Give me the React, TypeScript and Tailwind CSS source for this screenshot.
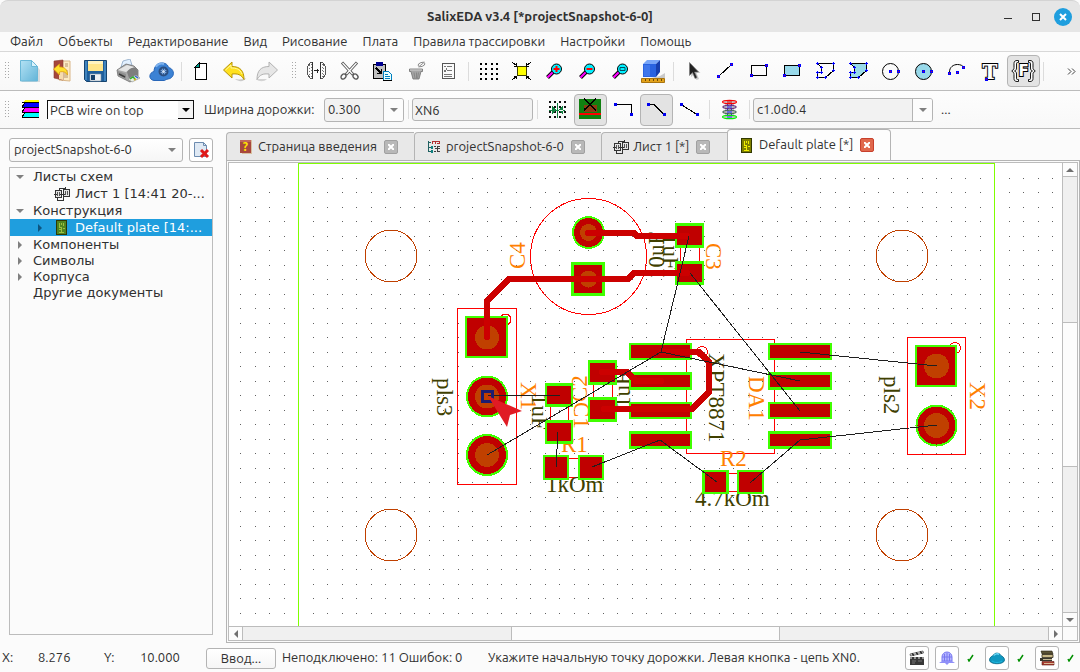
import { useState } from 'react';
import type { ReactNode } from 'react';
import clsx from 'clsx';

const uiFont = "font-['Ubuntu','Noto_Sans',sans-serif]";
const treeFont = "font-['DejaVu_Sans',sans-serif]";

function Icon({ children, crisp = false }: { children: ReactNode; crisp?: boolean }) {
  return (
    <svg
      className="block h-6 w-[25px] shrink-0"
      viewBox="0 0 25 24"
      fill="none"
      shapeRendering={crisp ? 'crispEdges' : 'auto'}
      aria-hidden="true"
    >
      {children}
    </svg>
  );
}

// Blue handle with a red core, used by all drawing tools
function Node({ x, y }: { x: number; y: number }) {
  return (
    <>
      <rect x={x - 1} y={y - 1} width="3" height="3" fill="#0000ff" />
      <rect x={x} y={y} width="1" height="1" fill="#c00040" />
    </>
  );
}

function Cross({ x, y }: { x: number; y: number }) {
  return <path d={`M${x - 1} ${y}h3v1h-3zM${x} ${y - 1}h1v3h-1z`} fill="#0000ff" />;
}

function Magnifier({ children }: { children: ReactNode }) {
  return (
    <Icon>
      <path d="M5.500 18.500l6-6" stroke="#000" strokeWidth="4" />
      <path d="M5.500 18.500l6-6" stroke="#ff00ff" strokeWidth="2.200" />
      <circle cx="14.500" cy="10" r="5" fill="#00f0ff" stroke="#000" />
      {children}
    </Icon>
  );
}

const POLY = 'M4.500 4.500h16v7l-8 7h-8v-5h4v-5z';
const polyNodes = [[4, 4], [20, 4], [20, 11], [12, 18], [4, 18], [4, 13], [8, 13], [8, 8]];

const icons: Record<string, ReactNode> = {
  new: (
    <Icon>
      <path d="M5 3h12l6 8v12H5z" fill="#9aa4aa" opacity=".35" />
      <path d="M3.500 1.500h11l6 6v14.500h-17z" fill="url(#paper)" stroke="#6ab8d8" />
      <path d="M14.500 1.500l6 6h-6z" fill="#d8f2fc" stroke="#6ab8d8" />
    </Icon>
  ),
  open: (
    <Icon>
      <path d="M9 2h11v20l-11-1z" fill="#fdebc4" stroke="#d9b688" />
      <path d="M15 5h3M15 7h3M14 12h4M14 14h4M14 16h4M14 18h4" stroke="#b4946c" />
      <path d="M4 2l9-1v20l-9-2z" fill="#a5473c" stroke="#8a3a30" strokeWidth=".6" />
      <path d="M9 11h4v10l-4-1z" fill="#f6dcae" />
      <path d="M3.500 10l6-5v3c5 0 8 2 8 8-2-3-4-4-8-3v3z" fill="#ffe030" stroke="#e0a010" strokeWidth=".8" />
    </Icon>
  ),
  save: (
    <Icon>
      <path d="M1.500 1.500h22v21h-20l-2-2z" fill="#1f5f9c" stroke="#17446f" />
      <path d="M5 2h15v10H5z" fill="#ffe58a" />
      <path d="M5 2h15v3H5z" fill="#fff3c0" />
      <path d="M2 2h2v19H2zM21 2h2v20h-2z" fill="#3f83bd" />
      <path d="M7 15h11v7H7z" fill="#eef1f4" stroke="#8294a4" strokeWidth=".6" />
      <path d="M8 16h4v5H8z" fill="#15406a" />
    </Icon>
  ),
  print: (
    <Icon>
      <path d="M5 8l2-6 7-2 2 6z" fill="#e2f0ff" stroke="#8ba6c4" strokeWidth=".8" />
      <path d="M1 11l9-6 8 2 4 4v7l-8 5-12-6z" fill="#a8a8a8" stroke="#6f6f6f" strokeWidth=".8" />
      <path d="M2 11l9-5 7 2-8 5z" fill="#e4e4e4" />
      <path d="M11 13c2-4 6-5 9-4l2 3v5l-8 5z" fill="#7e7e7e" />
      <path d="M2 12l8 3v5l-8-4z" fill="#909090" />
      <path d="M3 15l6 3" stroke="#3c3c3c" strokeWidth="1.500" />
      <path d="M12 20l8-4 4 3-8 4z" fill="#e8efe4" stroke="#8a8a8a" strokeWidth=".6" />
      <path d="M14 20l3-2 2 2" stroke="#2fae2f" strokeWidth="1.500" />
      <path d="M19 17l3 2" stroke="#315bd0" strokeWidth="1.500" />
      <path d="M18 21l2-1" stroke="#d8b020" strokeWidth="1.500" />
    </Icon>
  ),
  cloud: (
    <Icon>
      <path
        d="M5 21.500c-6-1-5-8 0-9 0-7 6-10 11-8 2 .8 3 2 3.500 4 5 1 6.500 7 3 10-2 2-5 1-7 3z"
        fill="#3c82d4"
        stroke="#2866b8"
      />
      <path d="M7 8c1-3 5-4 8-3" stroke="#7db2ee" strokeWidth="2" />
      <circle cx="14.500" cy="12.500" r="4" fill="#7ba6dc" stroke="#2c4f80" strokeWidth="2" />
      <path d="M14.500 8v9M10 12.500h9M11.500 9.500l6 6M17.500 9.500l-6 6" stroke="#24518c" strokeWidth=".8" />
      <circle cx="14.500" cy="12.500" r="1.500" fill="#cfe2f8" />
    </Icon>
  ),
  page: (
    <Icon crisp>
      <path d="M9.500 4.500h8v16h-11v-13z" fill="#fff" stroke="#000" />
      <path d="M6 8h4V4z" fill="#00a090" stroke="#000" />
    </Icon>
  ),
  undo: (
    <Icon>
      <path d="M13 20c5 1 9 0 11-1-2 4-7 4-11 1z" fill="#9c9c9c" opacity=".5" />
      <path d="M1.500 11L10 3v4.500c8 0 12 4 12 13-3-5-6-6-12-5.500v4z" fill="#ffe11f" stroke="#b79408" />
      <path d="M3.500 11L9 6v3c5 0 9 1 11 6" stroke="#fff6a0" />
    </Icon>
  ),
  redo: (
    <Icon>
      <path d="M1 20c3 3 8 3 11 0z" fill="#9c9c9c" opacity=".4" />
      <path d="M22.500 11L14 3v4.500c-8 0-12 4-12 13 3-5 6-6 12-5.500v4z" fill="#e6e6e6" stroke="#b2b2b2" />
    </Icon>
  ),
  spacing: (
    <Icon crisp>
      <path d="M8.500 3v17M16.500 3v17" stroke="#333" />
      <path d="M8 3.500H6.500l-3 4v8l3 4H8M17 3.500h1.500l3 4v8l-3 4H17" stroke="#555" />
      <path d="M5.500 6v11M7 5v13M19.500 6v11M18 5v13" stroke="#777" strokeDasharray="1 2" />
      <path d="M10 11.500h5M13.500 9.500v4" stroke="#222" />
    </Icon>
  ),
  cut: (
    <Icon>
      <path d="M5 3.500l11 12M20 3.500l-11 12" stroke="#555" strokeWidth="3" />
      <path d="M5.500 4l10 11M19.500 4l-10 11" stroke="#fff" strokeWidth="1.200" />
      <ellipse cx="6.500" cy="17.500" rx="2.200" ry="2.800" transform="rotate(45 6.500 17.500)" stroke="#555" strokeWidth="1.300" />
      <ellipse cx="18.500" cy="17.500" rx="2.200" ry="2.800" transform="rotate(-45 18.500 17.500)" stroke="#555" strokeWidth="1.300" />
    </Icon>
  ),
  paste: (
    <Icon crisp>
      <path d="M3.500 5.500h12v14h-12z" fill="#c0c0c0" stroke="#000" />
      <path d="M6 3h7v4H6z" fill="#000090" />
      <path d="M6 9l5 5M11.500 9.500v5h-5" stroke="#000" strokeWidth="1.500" />
      <path d="M13.500 12.500h5l3 3v6h-8z" fill="#e8ffff" stroke="#0080c0" />
      <path d="M15 15.500h3M15 17.500h5M15 19.500h5" stroke="#0080c0" />
      <path d="M13 21.500h9" stroke="#000" />
    </Icon>
  ),
  purge: (
    <Icon>
      <path d="M6.500 10h13v2.500h-1.500l-2 7.500h-6l-2-7.500h-1.500z" fill="#a4a4a4" stroke="#707070" strokeWidth=".8" />
      <path d="M7 11h12" stroke="#d0d0d0" />
      <path d="M11 13.500l1 6M13.500 13.500v6M15.500 13.500l-1 6" stroke="#808080" strokeWidth=".8" />
      <ellipse cx="18.500" cy="5.500" rx="3.500" ry="2" fill="#fafafa" stroke="#888" strokeWidth=".9" transform="rotate(-20 18.500 5.500)" />
      <path d="M15.500 8l6-5" stroke="#888" strokeWidth=".9" />
    </Icon>
  ),
  note: (
    <Icon crisp>
      <path d="M6.500 4.500h12v15h-12z" fill="#fafafa" stroke="#555" />
      <path d="M8 7.500h2M11 7.500h5M8 11.500l1 1 2-3M11 11.500h5M8 15.500h8M8 17.500h8" stroke="#777" />
    </Icon>
  ),
  grid: (
    <Icon crisp>
      {[4, 9, 14, 19].map((y) =>
        [4, 9, 15, 20].map((x) => <rect key={`${x}-${y}`} x={x} y={y} width="2" height="2" fill="#000" />),
      )}
    </Icon>
  ),
  fit: (
    <Icon crisp>
      <path d="M8.500 7.500h9v9h-9z" fill="#ffff00" stroke="#404000" />
      <path d="M3 3l5 4M22 3l-5 4M3 21l5-4M22 21l-5-4" stroke="#000" />
      <path d="M7.500 4v3H5M17.500 4v3H20M7.500 20v-3H5M17.500 20v-3H20" stroke="#000" />
    </Icon>
  ),
  zoomIn: (
    <Magnifier>
      <path d="M14.500 7v6M11.500 10h6" stroke="#ff0000" strokeWidth="2" />
    </Magnifier>
  ),
  zoomOut: (
    <Magnifier>
      <path d="M11.500 10h6" stroke="#ff0000" strokeWidth="2" />
    </Magnifier>
  ),
  zoomArea: (
    <Magnifier>
      <path d="M12 8.500h5v3h-5z" stroke="#005060" />
    </Magnifier>
  ),
  cube: (
    <Icon>
      <path d="M19 17l5-3v5H10z" fill="#999" opacity=".5" />
      <path d="M2 5l4-4h13l-4 4z" fill="#77a5f8" />
      <path d="M2 5h13v13H2z" fill="#2a63e0" />
      <path d="M15 5l4-4v12l-4 5z" fill="#173fae" />
      <path d="M3 6h6v11H3z" fill="#4d84f2" opacity=".6" />
      <path d="M.5 19.500h23v4H.5z" fill="#e3a21a" stroke="#a87410" />
      <path d="M4.500 20v2M8.500 20v2M12.500 20v2M16.500 20v2M20.500 20v2" stroke="#6b4a08" />
    </Icon>
  ),
  cursor: (
    <Icon>
      <path d="M10 5v13l3-3 2.500 6 2.500-1-2.500-6h4z" fill="#999" opacity=".5" />
      <path d="M8.500 3.500v13l3-3 2.500 6 2-1-2.500-5.500h4z" fill="#222" stroke="#777" strokeWidth=".6" />
    </Icon>
  ),
  line: (
    <Icon crisp>
      <path d="M4 18L18 5" stroke="#000" />
      <Node x={4} y={17} />
      <Node x={17} y={5} />
    </Icon>
  ),
  rect: (
    <Icon crisp>
      <path d="M4.500 6.500h15v10h-15z" stroke="#000" />
      <Node x={4} y={16} />
      <Node x={19} y={6} />
    </Icon>
  ),
  rectFill: (
    <Icon crisp>
      <path d="M4.500 6.500h15v10h-15z" fill="#98d9ea" stroke="#000" />
      <Node x={4} y={16} />
      <Node x={19} y={6} />
    </Icon>
  ),
  poly: (
    <Icon crisp>
      <path d={POLY} stroke="#000" />
      {polyNodes.map(([x, y]) => <Cross key={`${x}-${y}`} x={x} y={y} />)}
    </Icon>
  ),
  polyFill: (
    <Icon crisp>
      <path d={POLY} fill="#98d9ea" stroke="#000" />
      {polyNodes.map(([x, y]) => <Cross key={`${x}-${y}`} x={x} y={y} />)}
    </Icon>
  ),
  circle: (
    <Icon>
      <circle cx="11.500" cy="12.500" r="8" stroke="#000" />
      <Node x={11} y={12} />
      <Node x={19} y={12} />
    </Icon>
  ),
  circleFill: (
    <Icon>
      <circle cx="11.500" cy="12.500" r="8" fill="#98d9ea" stroke="#000" />
      <Node x={11} y={12} />
      <Node x={19} y={12} />
    </Icon>
  ),
  arc: (
    <Icon>
      <path d="M4.500 13c0-5 4-7.500 8-7.500 3 0 5 1 6.500 3" stroke="#000" />
      <Node x={4} y={14} />
      <Node x={12} y={13} />
      <Node x={18} y={8} />
    </Icon>
  ),
  text: (
    <Icon>
      <text
        x="12"
        y="20"
        textAnchor="middle"
        className="font-['DejaVu_Serif',serif] text-[20px] font-bold"
        fill="#fff"
        stroke="#000"
        strokeWidth="2"
        paintOrder="stroke"
      >
        T
      </text>
      <Node x={8} y={20} />
    </Icon>
  ),
  frame: (
    <Icon>
      <text
        x="12.500"
        y="17"
        textAnchor="middle"
        className="font-['DejaVu_Sans',sans-serif] text-[15px] font-bold"
        fill="#fff"
        stroke="#000"
        strokeWidth="2"
        paintOrder="stroke"
      >
        F
      </text>
      <path
        d="M7.500 1.500H6c-2 0-3 1-3 3v4c0 2-.5 2.500-2 3v1c1.500.5 2 1 2 3v4c0 2 1 3 3 3h1.500v-2H6.500c-.8 0-1-.4-1-1.200V15c0-1.700-.6-2.500-2-3 1.400-.5 2-1.300 2-3V4.700c0-.8.2-1.200 1-1.200h1zM17.500 1.500H19c2 0 3 1 3 3v4c0 2 .5 2.500 2 3v1c-1.500.5-2 1-2 3v4c0 2-1 3-3 3h-1.500v-2h1c.8 0 1-.4 1-1.200V15c0-1.700.6-2.500 2-3-1.400-.5-2-1.300-2-3V4.700c0-.8-.2-1.200-1-1.200h-1z"
        fill="#fff"
        stroke="#000"
        strokeWidth=".9"
      />
    </Icon>
  ),
  layers: (
    <Icon crisp>
      <path d="M8 2h14v3H5z" fill="#ffff00" />
      <path d="M8 5h14v4H5z" fill="#0000ff" />
      <path d="M8 10h14v4H5z" fill="#ff00ff" />
      <path d="M8 15h14v4H5z" fill="#00ffff" />
      <path d="M5 4.500h17M5 9.500h17M5 14.500h17M5 19.500h17M8 5l-3 4M8 10l-3 4M8 15l-3 4" stroke="#000" />
    </Icon>
  ),
  snap: (
    <Icon crisp>
      {[3, 8, 13, 18].map((y) =>
        [4, 9, 14, 19].map((x) => <rect key={`${x}-${y}`} x={x} y={y} width="2" height="2" fill="#111" />),
      )}
      <path d="M12 5h1v15h-1zM7 8l5 4-5 4zM18 8l-5 4 5 4zM4 12h16v1H4z" fill="#108040" />
    </Icon>
  ),
  drc: (
    <Icon crisp>
      <path d="M1 1h22v20H1z" fill="#108010" />
      <path d="M6 7h13v7H6z" fill="#8c3c14" />
      <path d="M1 15h22v2H1z" fill="#ff0000" />
      <path d="M6 1l12 11M18 1L6 12" stroke="#000" strokeWidth="1.500" />
    </Icon>
  ),
  corner90: (
    <Icon crisp>
      <path d="M4 6.500h16.500V17" stroke="#000" />
      <path d="M3 5h3v3H3zM19 15h3v3h-3z" fill="#0000ee" />
    </Icon>
  ),
  corner45: (
    <Icon crisp>
      <path d="M4 6.500h6l10 10" stroke="#000" />
      <path d="M3 5h3v3H3zM19 15h3v3h-3z" fill="#0000ee" />
    </Icon>
  ),
  direct: (
    <Icon crisp>
      <path d="M4 6.500l16 10" stroke="#000" />
      <path d="M3 5h3v3H3zM19 15h3v3h-3z" fill="#0000ee" />
    </Icon>
  ),
  via: (
    <Icon>
      <path d="M8 4h9v15H8z" fill="#c4c4cc" />
      <path d="M10.500 4v15M14.500 4v15" stroke="#3030d0" strokeDasharray="3 2" />
      <ellipse cx="12.500" cy="4" rx="7" ry="1.700" fill="#c8c8c8" stroke="#ff0000" strokeWidth="1.200" />
      <path d="M10 4h5" stroke="#d00000" />
      <ellipse cx="12.500" cy="9" rx="7" ry="1.700" fill="#b8b8b8" stroke="#602080" />
      <ellipse cx="12.500" cy="14" rx="7" ry="1.700" fill="#b8b8b8" stroke="#406050" />
      <ellipse cx="12.500" cy="19" rx="7" ry="1.700" fill="#c8c8c8" stroke="#00f000" strokeWidth="1.200" />
      <path d="M10 9h5M10 14h5M10 19h5" stroke="#2020ff" />
    </Icon>
  ),
};

function ToolButton({ name, label, active = false }: { name: string; label: string; active?: boolean }) {
  return (
    <button
      aria-label={label}
      aria-pressed={active}
      className={clsx(
        'flex h-8 w-[33px] shrink-0 items-center justify-center rounded border',
        active ? 'border-[#b4b4b4] bg-[#e3e3e3]' : 'border-transparent hover:bg-[#ececec]',
      )}
    >
      {icons[name]}
    </button>
  );
}

function Separator({ className = 'w-[7px]' }: { className?: string }) {
  return (
    <div className={clsx('flex shrink-0 justify-center', className)}>
      <div className="h-[19px] w-px bg-[#dcdcdc]" />
    </div>
  );
}

function Grip() {
  return (
    <svg className="h-[18px] w-1 shrink-0" viewBox="0 0 4 18" shapeRendering="crispEdges" aria-hidden="true">
      {[0, 3, 6, 9, 12, 15].map((y) => (
        <path key={y} d={`M0 ${y}h1v1h-1zM3 ${y}h1v1h-1z`} fill="#a8a8a8" />
      ))}
    </svg>
  );
}

function Arrow({ dir, className = '' }: { dir: 'up' | 'down' | 'left' | 'right'; className?: string }) {
  const paths = { up: 'M0 6L4 2l4 4z', down: 'M0 2l4 4 4-4z', left: 'M6 0L2 4l4 4z', right: 'M2 0l4 4-4 4z' };
  return (
    <svg className={clsx('size-2 shrink-0', className)} viewBox="0 0 8 8" fill="currentColor" aria-hidden="true">
      <path d={paths[dir]} />
    </svg>
  );
}

function TitleBar() {
  return (
    <header className="grid h-8 grid-cols-[1fr_auto_1fr] items-center rounded-t-lg border-t border-[#d4d4d4] bg-[#e6e6e6] pr-2">
      <span />
      <h1 className="pl-2 text-[13px] font-semibold text-[#303030]">SalixEDA v3.4 [*projectSnapshot-6-0]</h1>
      <div className="flex items-center justify-end">
        <button aria-label="Свернуть" className="flex h-6 w-7 items-center justify-center">
          <span className="mt-1 h-px w-2 bg-[#303030]" />
        </button>
        <button aria-label="Развернуть" className="flex h-6 w-7 items-center justify-center">
          <span className="size-2 border border-[#303030]" />
        </button>
        <button
          aria-label="Закрыть"
          className="ml-1 flex size-[18px] items-center justify-center rounded-full bg-[#1f9ede]"
        >
          <svg className="size-2" viewBox="0 0 8 8" stroke="#fff" strokeWidth="2">
            <path d="M1 1l6 6M7 1L1 7" />
          </svg>
        </button>
      </div>
    </header>
  );
}

const menus = [
  'Файл',
  'Объекты',
  'Редактирование',
  'Вид',
  'Рисование',
  'Плата',
  'Правила трассировки',
  'Настройки',
  'Помощь',
];

function MenuBar() {
  return (
    <nav className="flex h-5 items-center gap-[15px] border-b border-[#d8d8d8] bg-[#fbfbfb] px-[10px]">
      {menus.map((m) => (
        <button key={m} className="whitespace-nowrap">
          {m}
        </button>
      ))}
    </nav>
  );
}

function MainToolbar() {
  return (
    <div className="flex h-[39px] items-center overflow-hidden border-b border-[#bcbcbc] bg-linear-to-b from-[#fdfdfd] to-[#f8f8f8] pr-1 pl-[5px]">
      <Grip />
      <div className="w-1 shrink-0" />
      <ToolButton name="new" label="Новый" />
      <ToolButton name="open" label="Открыть" />
      <ToolButton name="save" label="Сохранить" />
      <ToolButton name="print" label="Печать" />
      <ToolButton name="cloud" label="Облако" />
      <Separator />
      <ToolButton name="page" label="Страница" />
      <ToolButton name="undo" label="Отменить" />
      <ToolButton name="redo" label="Повторить" />
      <div className="flex w-4 shrink-0 justify-center pl-1">
        <Grip />
      </div>
      <ToolButton name="spacing" label="Зазор" />
      <ToolButton name="cut" label="Вырезать" />
      <ToolButton name="paste" label="Вставить" />
      <ToolButton name="purge" label="Удалить" />
      <ToolButton name="note" label="Свойства" />
      <Separator />
      <ToolButton name="grid" label="Сетка" />
      <ToolButton name="fit" label="Показать все" />
      <ToolButton name="zoomIn" label="Увеличить" />
      <ToolButton name="zoomOut" label="Уменьшить" />
      <ToolButton name="zoomArea" label="Увеличить область" />
      <ToolButton name="cube" label="Вид 3D" />
      <Separator />
      <ToolButton name="cursor" label="Выбор" />
      <ToolButton name="line" label="Линия" />
      <ToolButton name="rect" label="Прямоугольник" />
      <ToolButton name="rectFill" label="Залитый прямоугольник" />
      <ToolButton name="poly" label="Полигон" />
      <ToolButton name="polyFill" label="Залитый полигон" />
      <ToolButton name="circle" label="Окружность" />
      <ToolButton name="circleFill" label="Круг" />
      <ToolButton name="arc" label="Дуга" />
      <ToolButton name="text" label="Текст" />
      <ToolButton name="frame" label="Поле" active />
      <Separator />
      <button aria-label="Еще" className="ml-auto flex shrink-0">
        <svg className="h-[7px] w-[9px]" viewBox="0 0 9 7" fill="none" stroke="#404040">
          <path d="M1 .5l3 3-3 3M5 .5l3 3-3 3" />
        </svg>
      </button>
    </div>
  );
}

function Combo({ value, label, className }: { value: string; label: string; className: string }) {
  return (
    <div
      className={clsx(
        'relative h-6 shrink-0 overflow-hidden rounded-[3px] border border-[#b4b4b4] bg-[#f2f2f2]',
        className,
      )}
    >
      <select aria-label={label} className="h-full w-full appearance-none bg-transparent pl-[3px] outline-none">
        <option>{value}</option>
      </select>
      <div className="pointer-events-none absolute inset-y-0 right-0 flex w-5 items-center justify-center border-l border-[#b4b4b4] bg-[#fcfcfc] text-[#808080]">
        <Arrow dir="down" />
      </div>
    </div>
  );
}

function RouteToolbar() {
  const [net, setNet] = useState('XN6');
  return (
    <div className="flex h-[38px] items-center overflow-hidden border-b border-[#bcbcbc] bg-linear-to-b from-[#fdfdfd] to-[#f8f8f8] pl-[5px]">
      <Grip />
      <div className="ml-2">{icons.layers}</div>
      <div className="relative ml-[5px] h-[19px] w-[147px] shrink-0 border-t border-l border-[#101010] bg-white">
        <select aria-label="Слой" className="block h-full w-full appearance-none bg-transparent pl-[2px] leading-4 outline-none">
          <option>PCB wire on top</option>
        </select>
        <div className="pointer-events-none absolute inset-y-0 right-0 flex w-4 items-center justify-center border-r border-b border-[#101010] bg-[#f4f4f4] text-black">
          <Arrow dir="down" />
        </div>
      </div>
      <span className="ml-[10px] w-[120px] shrink-0 whitespace-nowrap">Ширина дорожки:</span>
      <Combo value="0.300" label="Ширина дорожки" className="w-20" />
      <Separator className="w-2" />
      <input
        aria-label="Цепь"
        value={net}
        onChange={(e) => setNet(e.target.value)}
        className="h-[23px] w-[121px] shrink-0 rounded-[3px] border border-[#b4b4b4] bg-[#f2f2f2] pl-[2px] outline-none"
      />
      <Separator className="w-2" />
      <ToolButton name="snap" label="Привязка" />
      <ToolButton name="drc" label="Контроль" active />
      <ToolButton name="corner90" label="Прямой угол" />
      <ToolButton name="corner45" label="Угол 45" active />
      <ToolButton name="direct" label="Прямая" />
      <Separator />
      <ToolButton name="via" label="Переход" />
      <Separator />
      <Combo value="c1.0d0.4" label="Переходное отверстие" className="w-[180px]" />
      <button aria-label="Выбрать" className="ml-2 shrink-0">
        ...
      </button>
    </div>
  );
}

function SheetIcon() {
  return (
    <svg className="h-4 w-4 shrink-0" viewBox="0 0 16 16" fill="none" stroke="#333" shapeRendering="crispEdges" aria-hidden="true">
      <path d="M1.500 4.500h6v7h-6zM9.500 3.500h6v7h-6z" fill="#e4e4e4" />
      <path d="M3.500 6v4M5.500 6v4M11.500 5v4M13.500 5v4" stroke="#555" />
      <path d="M0 8.500h3M6 8.500h5M5.500 4V2.500h6V1M3.500 12v2.500h6V11" />
    </svg>
  );
}

function PlateIcon({ color, trace }: { color: string; trace: string }) {
  return (
    <svg className="h-[15px] w-[11px] shrink-0" viewBox="0 0 11 15" fill="none" shapeRendering="crispEdges" aria-hidden="true">
      <path d="M.5.5h10v14H.5z" fill={color} stroke="#303800" />
      <path d="M3.500 3v4h2v5M7.500 3v3M5.500 3v2M3 9.500h2M7 8.500h2M3 12.500h5" stroke={trace} />
    </svg>
  );
}

function TreeRow({
  label,
  open,
  leaf = false,
  nested = false,
  selected = false,
  tall = false,
  icon,
}: {
  label: string;
  open?: boolean;
  leaf?: boolean;
  nested?: boolean;
  selected?: boolean;
  tall?: boolean;
  icon?: ReactNode;
}) {
  return (
    <li
      role="treeitem"
      aria-selected={selected}
      className={clsx(
        'flex items-center overflow-hidden whitespace-nowrap',
        nested ? 'pl-[26px]' : 'pl-[6px]',
        tall ? 'h-[17px]' : 'h-4',
        selected && 'bg-[#1f9ede] text-white',
      )}
    >
      <span className={clsx('flex w-[17px] shrink-0', selected ? 'text-[#0d5580]' : 'text-[#808080]')}>
        {!leaf && <Arrow dir={open ? 'down' : 'right'} />}
      </span>
      {icon && <span className="mr-[5px] flex w-[17px] shrink-0 justify-center">{icon}</span>}
      {label}
    </li>
  );
}

function Sidebar() {
  return (
    <aside className="flex w-[204px] shrink-0 flex-col">
      <div className="flex h-6 gap-[6px]">
        <div className="relative flex-1">
          <select
            aria-label="Проект"
            className="h-full w-full appearance-none rounded-[3px] border border-[#b4b4b4] bg-linear-to-b from-white to-[#f6f6f6] pl-1 outline-none"
          >
            <option>projectSnapshot-6-0</option>
          </select>
          <Arrow dir="down" className="pointer-events-none absolute top-2 right-[7px] text-[#808080]" />
        </div>
        <button
          aria-label="Закрыть проект"
          className="flex w-6 items-center justify-center rounded-[3px] border border-[#b4b4b4] bg-white"
        >
          <svg className="size-[18px]" viewBox="0 0 18 18" fill="none">
            <path d="M2.500 1.500h9l3 3v11h-12z" fill="#dfe9f4" stroke="#6d8cb0" />
            <path d="M11.500 1.500v3h3" stroke="#6d8cb0" />
            <path d="M9 9l7 7M16 9l-7 7" stroke="#e01818" strokeWidth="3" />
          </svg>
        </button>
      </div>
      <ul role="tree" className={clsx('mt-[5px] flex-1 border border-[#bcbcbc] text-[13px]', treeFont)}>
        <TreeRow label="Листы схем" open tall />
        <TreeRow label="Лист 1 [14:41 20-..." nested leaf tall icon={<SheetIcon />} />
        <TreeRow label="Конструкция" open tall />
        <TreeRow
          label="Default plate [14:..."
          nested
          selected
          tall
          icon={<PlateIcon color="#4f8420" trace="#9cc040" />}
        />
        <TreeRow label="Компоненты" tall />
        <TreeRow label="Символы" />
        <TreeRow label="Корпуса" />
        <TreeRow label="Другие документы" leaf />
      </ul>
    </aside>
  );
}

function Tab({ label, icon, active = false, width }: { label: string; icon: ReactNode; active?: boolean; width: string }) {
  return (
    <div
      className={clsx(
        'flex shrink-0 items-center border-t border-l border-[#b4b4b4]',
        width,
        active ? 'h-[31px] rounded-t border-r bg-[#fdfdfd] pl-[13px]' : 'h-7 rounded-tl bg-[#e8e8e8] pl-[11px]',
      )}
    >
      <button
        role="tab"
        aria-selected={active}
        className={clsx('flex items-center whitespace-nowrap', active ? 'gap-[7px]' : 'gap-1')}
      >
        {icon}
        {label}
      </button>
      <button
        aria-label={`Закрыть ${label}`}
        className={clsx(
          'ml-[7px] flex size-[14px] shrink-0 items-center justify-center rounded-[2px] border',
          active ? 'border-[#c8402c] bg-[#e0684c]' : 'border-[#a0a0a0] bg-[#b8b8b8]',
        )}
      >
        <svg className="size-[6px]" viewBox="0 0 6 6" stroke="#fff" strokeWidth="2">
          <path d="M0 0l6 6M6 0L0 6" />
        </svg>
      </button>
    </div>
  );
}

function HelpIcon() {
  return (
    <svg className="h-4 w-4 shrink-0" viewBox="0 0 16 16" aria-hidden="true">
      <path d="M2 1h11v13H2z" fill="#a8483e" />
      <path d="M2 1h11v2H2z" fill="#c0685c" />
      <path d="M13 1h1v14H4v-1h9z" fill="#d8c0a0" />
      <text x="7.500" y="12" textAnchor="middle" className="text-[12px] font-bold" fill="#ffe000">
        ?
      </text>
    </svg>
  );
}

function ProjectIcon() {
  return (
    <svg className="h-4 w-4 shrink-0" viewBox="0 0 16 16" fill="none" shapeRendering="crispEdges" aria-hidden="true">
      <path d="M2.500 2v11M2 3.500h3M2 8.500h5M2 12.500h5" stroke="#206060" />
      <path d="M6 2.500h8M6.500 2v3M9.500 2v3M13.500 2v3M11 4.500h2" stroke="#b03030" />
      <path d="M8 7.500h2M12 7.500h2M8.500 9.500h2M12 9.500h2M8 12.500h2M12 12.500h2M11.500 7v6" stroke="#404040" />
      <path d="M5 7h2v3H5zM5 11h2v3H5z" fill="#108080" />
    </svg>
  );
}

const GRID = 14.5;
const gridDots = Array.from({ length: 140 }, (_, i) => Math.ceil(240 + i * GRID)).flatMap((x) =>
  Array.from({ length: 80 }, (_, j) => `M${x} ${Math.floor(178 + j * GRID)}h1v1h-1z`),
).join('');

type Pad = [number, number, number, number, number, number];

// x, y, width, height with the mask ring, then ring thickness across x and y
const pads: Pad[] = [
  [675, 223, 29, 25, 2, 3],
  [675, 261, 29, 24, 2, 3],
  [545, 383, 28, 24, 2, 3],
  [545, 420, 28, 24, 2, 3],
  [588, 360, 29, 25, 2, 3],
  [588, 397, 29, 25, 2, 3],
  [543, 455, 26, 25, 2, 2],
  [578, 455, 26, 25, 2, 2],
  [702, 470, 27, 24, 3, 2],
  [737, 470, 27, 24, 2, 2],
  [629, 343, 63, 17, 2, 2],
  [629, 372, 63, 18, 2, 3],
  [629, 402, 63, 17, 2, 2],
  [629, 431, 63, 18, 2, 3],
  [768, 343, 64, 17, 2, 2],
  [768, 372, 64, 18, 2, 3],
  [768, 402, 64, 17, 2, 2],
  [768, 431, 64, 18, 2, 3],
  [571, 262, 34, 34, 3, 3],
  [465, 316, 43, 42, 2, 2],
  [915, 345, 42, 42, 2, 2],
];

const roundPads = [
  [588.5, 232.5, 15.5],
  [487, 396.5, 20],
  [487, 455, 20],
  [936.5, 425.5, 20],
];

const drills = [
  [588.5, 232.5, 8.5],
  [588.5, 279, 8.5],
  [487, 337.5, 12],
  [487, 396.5, 12],
  [487, 455, 12],
  [936.5, 366, 12.5],
  [936.5, 425.5, 12.5],
];

const airWires = [
  'M689 236L661 352L487 455',
  'M690 273L800 411',
  'M661 352L800 381',
  'M488 395.5H560',
  'M558 432L556 467',
  'M592 467L660 440L717 482',
  'M750 483L800 440L937 425',
  'M800 352L937 366',
];

type BoardLabel = { text: string; x: number; y: number; turn?: number; value?: boolean };

const boardLabels: BoardLabel[] = [
  { text: 'C4', x: 525, y: 269, turn: -90 },
  { text: 'C3', x: 706, y: 243, turn: 90 },
  { text: '10uF', x: 664, y: 279, turn: -90, value: true },
  { text: '1uF', x: 663, y: 234, turn: 90, value: true },
  { text: 'X1', x: 521, y: 382, turn: 90 },
  { text: 'pls3', x: 437, y: 378, turn: 90, value: true },
  { text: '1uF', x: 532, y: 394, turn: 90, value: true },
  { text: 'C2', x: 587, y: 402, turn: -90 },
  { text: 'C1', x: 574, y: 402, turn: 90 },
  { text: '1uF', x: 630, y: 408, turn: -90, value: true },
  { text: 'R1', x: 561, y: 452 },
  { text: '1kOm', x: 546, y: 492, value: true },
  { text: 'XPT8871', x: 709, y: 353, turn: 90, value: true },
  { text: 'DA1', x: 749, y: 376, turn: 90 },
  { text: 'R2', x: 720, y: 466 },
  { text: '4.7kOm', x: 695, y: 506, value: true },
  { text: 'pls2', x: 884, y: 376, turn: 90, value: true },
  { text: 'X2', x: 970, y: 382, turn: 90 },
];

function Board() {
  return (
    <svg className="absolute inset-0 h-full w-full" shapeRendering="crispEdges" aria-label="Плата">
      <g transform="translate(-229 -163)">
        <path d={gridDots} fill="#606060" />
        <path d="M298.500 900V163.500H994.500V900" fill="none" stroke="#80ff00" />
        <g fill="none" stroke="#c04000">
          {[391, 902].flatMap((x) => [256, 535].map((y) => <circle key={`${x}-${y}`} cx={x} cy={y} r="26" />))}
        </g>
        <g fill="none" stroke="#ff0000">
          <circle cx="588.500" cy="256.500" r="58" />
          <circle cx="505.500" cy="319.500" r="5.500" />
          <circle cx="702" cy="352" r="5.500" />
          <circle cx="955" cy="348" r="5.500" />
          <path d="M457.500 308.500h59v176h-59zM686.500 339.500h88v114h-88zM907.500 337.500h58v117h-58z" />
          <path d="M680.500 236v36M699.500 236v36M550.500 396v36M568.500 396v36M593.500 372v36M612.500 372v36" />
          <path d="M556 458.500h35M556 477.500h35M716 473.500h35M716 491.500h35" />
        </g>
        <g className="font-['Liberation_Serif',serif] text-[23px]">
          {boardLabels.map((l) => (
            <text
              key={`${l.text}-${l.x}`}
              transform={`translate(${l.x} ${l.y}) rotate(${l.turn ?? 0})`}
              fill={l.value ? '#404000' : '#ff8000'}
            >
              {l.text}
            </text>
          ))}
        </g>
        {pads.map(([x, y, w, h, rx, ry]) => (
          <g key={`${x}-${y}`}>
            <rect x={x} y={y} width={w} height={h} fill="#40ff00" />
            <rect x={x + rx} y={y + ry} width={w - 2 * rx} height={h - 2 * ry} fill="#c00000" />
          </g>
        ))}
        <g fill="#c00000" stroke="#40ff00" strokeWidth="2">
          {roundPads.map(([x, y, r]) => (
            <circle key={`${x}-${y}`} cx={x} cy={y} r={r} />
          ))}
        </g>
        <g fill="#c04000">
          {drills.map(([x, y, r]) => (
            <circle key={`${x}-${y}`} cx={x} cy={y} r={r} />
          ))}
        </g>
        <g fill="none" stroke="#cc0000" strokeWidth="6" strokeLinejoin="round" strokeLinecap="round">
          <path d="M588 233H634L637 236H687" />
          <path d="M487 337V301L509 279H628L634 273H687" />
          <path d="M602 372H627L636 381H661" />
          <path d="M604 409H692L709 392V362L699 352H662" />
        </g>
        <path d={airWires.join('')} fill="none" stroke="#202020" />
        <rect x="482.500" y="391.500" width="10" height="10" fill="none" stroke="#1c1c70" strokeWidth="3" />
        <path d="M488 396l34 15-12 4-3 12z" fill="#e01b24" shapeRendering="auto" />
      </g>
    </svg>
  );
}

const scrollButton = 'flex shrink-0 items-center justify-center bg-[#fcfcfc] text-[#707070]';

function Workspace() {
  return (
    <section className="flex min-w-0 flex-1 flex-col">
      <div role="tablist" className="flex h-[30px] items-end">
        <Tab label="Страница введения" icon={<HelpIcon />} width="w-[188px]" />
        <Tab label="projectSnapshot-6-0" icon={<ProjectIcon />} width="w-[187px]" />
        <Tab label="Лист 1 [*]" icon={<SheetIcon />} width="w-[126px]" />
        <Tab
          label="Default plate [*]"
          icon={<PlateIcon color="#808000" trace="#f0f000" />}
          width="w-[164px]"
          active
        />
      </div>
      <div className="flex min-h-0 flex-1 flex-col border border-[#b4b4b4] bg-[#fbfbfb] p-px">
        <div className="grid min-h-0 flex-1 grid-cols-[1fr_15px] grid-rows-[1fr_14px] border border-[#bcbcbc]">
          <div className="relative overflow-hidden bg-white">
            <Board />
          </div>
          <div className="flex flex-col border-l border-[#bcbcbc] bg-[#f0f0f0]">
            <button aria-label="Вверх" className={clsx(scrollButton, 'h-[14px] border-b border-[#bcbcbc]')}>
              <Arrow dir="up" />
            </button>
            <div className="flex flex-1 flex-col justify-center">
              <div className="h-1/3 border-y border-[#bcbcbc] bg-[#fcfcfc]" />
            </div>
            <button aria-label="Вниз" className={clsx(scrollButton, 'h-[14px] border-t border-[#bcbcbc]')}>
              <Arrow dir="down" />
            </button>
          </div>
          <div className="flex border-t border-[#bcbcbc] bg-[#f0f0f0]">
            <button aria-label="Влево" className={clsx(scrollButton, 'w-[14px] border-r border-[#bcbcbc]')}>
              <Arrow dir="left" />
            </button>
            <div className="flex flex-1 justify-center">
              <div className="w-1/3 border-x border-[#bcbcbc] bg-[#fcfcfc]" />
            </div>
            <button aria-label="Вправо" className={clsx(scrollButton, 'w-[14px] border-l border-[#bcbcbc]')}>
              <Arrow dir="right" />
            </button>
          </div>
          <div className="border-t border-l border-[#bcbcbc] bg-[#fbfbfb]" />
        </div>
      </div>
    </section>
  );
}

function StatusButton({ label, children }: { label: string; children: ReactNode }) {
  return (
    <button
      aria-label={label}
      className="flex size-6 shrink-0 items-center justify-center rounded-[3px] border border-[#b4b4b4] bg-white"
    >
      <svg className="size-4" viewBox="0 0 16 16" fill="none">
        {children}
      </svg>
    </button>
  );
}

function Check({ className }: { className: string }) {
  return (
    <svg className={clsx('ml-2 h-2 w-[7px] shrink-0', className)} viewBox="0 0 7 8" fill="none" aria-label="OK">
      <path d="M1 5l1 2L6 1" stroke="#009000" strokeWidth="1.500" />
    </svg>
  );
}

function StatusBar() {
  return (
    <footer className="flex h-[29px] items-center overflow-hidden whitespace-nowrap pt-px pl-[2px]">
      <span className="w-9 shrink-0">X:</span>
      <span className="w-[66px] shrink-0">8.276</span>
      <span className="w-9 shrink-0">Y:</span>
      <span className="w-[66px] shrink-0">10.000</span>
      <button className="h-[21px] w-[70px] shrink-0 rounded-[3px] border border-[#b4b4b4] bg-linear-to-b from-white to-[#f6f6f6] leading-4">
        Ввод...
      </button>
      <span className="ml-[6px] w-[206px] shrink-0">Неподключено: 11 Ошибок: 0</span>
      <span className="min-w-0 flex-1 overflow-hidden">Укажите начальную точку дорожки. Левая кнопка - цепь XN0.</span>
      <StatusButton label="Запись">
        <path d="M1 7h14v8H1z" fill="#383838" />
        <path d="M1 4l13-3 .5 2-13 3z" fill="#e8e8e8" stroke="#222" strokeWidth=".6" />
        <path d="M3 3.500l2 2M7 2.500l2 2M11 1.500l2 2" stroke="#222" strokeWidth="1.500" />
        <path d="M1 8h14" stroke="#eee" strokeDasharray="2 2" />
        <path d="M3 11h4M9 11h4M3 13h3" stroke="#777" />
      </StatusButton>
      <div className="w-[6px] shrink-0" />
      <StatusButton label="Сервер">
        <path d="M3 11V7a5 5 0 0 1 10 0v4z" fill="#b4b4ff" stroke="#7878f0" />
        <path d="M8 3v8M5.500 4v7M10.500 4v7M3 7h10" stroke="#7878f0" />
        <path d="M0 13l3-2h10l3 2H10l-2 2-2-2z" fill="#9090f8" />
      </StatusButton>
      <Check className="mr-[11px]" />
      <StatusButton label="Облако">
        <path d="M.5 10c0-3 3-4 4-5 2-3 6-2 7 0 1 1 4 2 4 5 0 5-15 5-15 0z" fill="#1098c0" stroke="#086888" strokeWidth=".8" />
        <path d="M5 5.500c1-2 4-2 5-1" stroke="#70d8f8" strokeWidth="1.500" />
        <path d="M3 11c3 2 7 2 10 0" stroke="#20b8e0" />
      </StatusButton>
      <Check className="mr-[11px]" />
      <StatusButton label="Библиотека">
        <path d="M2 1h11l1 3H3z" fill="#5a5236" stroke="#282414" strokeWidth=".6" />
        <path d="M3 4.500h11v3H3z" fill="#c8b888" stroke="#302818" strokeWidth=".8" />
        <path d="M1 8h12v3H1z" fill="#38362c" />
        <path d="M3 11.500h12v3.500H3z" fill="#a83c30" stroke="#601c14" strokeWidth=".6" />
        <path d="M4 9.500h9M5 13.500h10" stroke="#e8d8b0" strokeWidth=".8" />
      </StatusButton>
      <Check className="mr-[6px]" />
    </footer>
  );
}

export default function App() {
  return (
    <div className={clsx('flex h-screen flex-col bg-[#fbfbfb] text-[13px] text-[#303030]', uiFont)}>
      <svg className="absolute size-0" aria-hidden="true">
        <linearGradient id="paper" x1="0" y1="0" x2="1" y2="1">
          <stop offset="0" stopColor="#b4e2f4" />
          <stop offset="1" stopColor="#62b4d8" />
        </linearGradient>
      </svg>
      <TitleBar />
      <MenuBar />
      <MainToolbar />
      <RouteToolbar />
      <main className="flex min-h-0 flex-1">
        <div className="flex pt-[9px] pr-[13px] pb-2 pl-[9px]">
          <Sidebar />
        </div>
        <div className="flex min-w-0 flex-1 pt-px">
          <Workspace />
        </div>
      </main>
      <StatusBar />
    </div>
  );
}
